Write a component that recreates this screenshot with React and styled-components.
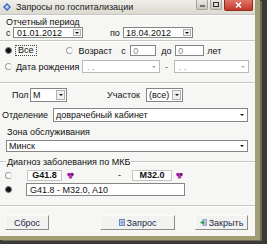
import React from "react";
import styled, { createGlobalStyle } from "styled-components";

const GlobalStyle = createGlobalStyle`
  html, body { margin: 0; padding: 0; background: #3b3a36; }
  body { font-family: "Liberation Sans", Arial, sans-serif; font-size: 9px; color: #111; }
  #root { width: 267px; height: 244px; overflow: hidden; }
`;

const Window = styled.div`
  width: 255px;
  height: 236px;
  background: #f6f6f4;
  border-right: 5px solid #a39d74;
  border-bottom: 4px solid #a39d74;
  box-shadow: 2px 1px 0 #6f6b55;
  display: flex;
  flex-direction: column;
`;

const TitleBar = styled.div`
  height: 14px;
  flex: none;
  display: flex;
  align-items: center;
  padding-left: 3px;
  background: linear-gradient(to bottom, #efeee9, #dcdad0);
`;

const TitleText = styled.span`
  margin-left: 5px;
  font-size: 9px;
  color: #1a1a1a;
  line-height: 14px;
`;

const Controls = styled.div`
  margin-left: auto;
  margin-right: 2px;
  align-self: flex-start;
  display: flex;
  align-items: flex-start;
  gap: 2px;
`;

const CtlButton = styled.div`
  width: ${(p) => p.$w}px;
  height: ${(p) => p.$h}px;
  display: flex;
  align-items: center;
  justify-content: center;
  border-radius: 0 0 2px 2px;
  background: ${(p) =>
    p.$close
      ? "linear-gradient(to bottom, #e0766a, #c3372a)"
      : "linear-gradient(to bottom, #e8e7e2, #c9c7bc)"};
  border: 1px solid ${(p) => (p.$close ? "#8f2a20" : "#a5a397")};
  border-top: none;
`;

const Body = styled.div`
  flex: 1;
  display: flex;
  flex-direction: column;
`;

const Section = styled.div`
  height: ${(p) => p.$h}px;
  flex: none;
  box-sizing: border-box;
  border-top: 1px solid #c6c6c2;
  box-shadow: inset 0 1px 0 #ffffff;
  padding-top: ${(p) => p.$pt || 0}px;
  display: flex;
  flex-direction: column;
`;

const Row = styled.div`
  height: ${(p) => p.$h}px;
  margin-top: ${(p) => p.$mt || 0}px;
  padding-left: ${(p) => p.$pl || 0}px;
  display: flex;
  align-items: center;
  flex: none;
`;

const Label = styled.span`
  margin-left: ${(p) => p.$ml || 0}px;
  width: ${(p) => (p.$w ? `${p.$w}px` : "auto")};
  flex: none;
  white-space: nowrap;
  line-height: 10px;
  color: ${(p) => p.$color || "#111"};
`;

const FocusLabel = styled.span`
  margin-left: ${(p) => p.$ml || 0}px;
  outline: 1px dotted #444;
  padding: 0 2px;
  line-height: 9px;
`;

const Caption = styled.span`
  margin-left: ${(p) => p.$ml || 0}px;
  margin-top: ${(p) => p.$mt || 0}px;
  align-self: flex-start;
  background: #f6f6f4;
  padding: 0 1px;
  line-height: 10px;
  white-space: nowrap;
`;

const Combo = styled.div`
  width: ${(p) => p.$w}px;
  height: ${(p) => p.$h}px;
  margin-left: ${(p) => p.$ml || 0}px;
  flex: none;
  box-sizing: border-box;
  border: 1px solid ${(p) => (p.$disabled ? "#b9b9b6" : "#858585")};
  background: #fff;
  display: flex;
  align-items: stretch;
`;

const ComboValue = styled.span`
  flex: 1;
  padding-left: ${(p) => p.$pl ?? 3}px;
  display: flex;
  align-items: center;
  color: ${(p) => (p.$disabled ? "#8a8a8a" : "#111")};
  font-weight: ${(p) => (p.$bold ? 700 : 400)};
  white-space: nowrap;
  overflow: hidden;
  font-size: ${(p) => p.$fs || 9}px;
`;

const Arrow = styled.span`
  width: ${(p) => p.$w || 8}px;
  flex: none;
  margin: 1px;
  box-sizing: border-box;
  background: ${(p) => (p.$flat ? "#fff" : "#efefed")};
  border: 1px solid ${(p) => (p.$flat ? "#fff" : "#b0b0ac")};
  display: flex;
  align-items: center;
  justify-content: center;
  &::after {
    content: "";
    border-left: 2px solid transparent;
    border-right: 2px solid transparent;
    border-top: 2px solid ${(p) => (p.$disabled ? "#a9a9a9" : "#111")};
  }
`;

const Radio = styled.span`
  width: 5px;
  height: 5px;
  flex: none;
  border-radius: 50%;
  border: 1px solid ${(p) => (p.$checked ? "#777" : "#a0a0a0")};
  border-right-color: ${(p) => (p.$checked ? "#777" : "#e4e4e4")};
  background: ${(p) => (p.$checked ? "#111" : "#fff")};
  margin-left: ${(p) => p.$ml || 0}px;
`;

const CodeBox = styled.div`
  width: ${(p) => p.$w}px;
  height: 11px;
  margin-left: ${(p) => p.$ml || 0}px;
  box-sizing: border-box;
  border: 1px solid #c5c5c2;
  background: #fff;
  display: flex;
  align-items: center;
  justify-content: center;
  font-weight: 700;
  font-size: 9px;
  flex: none;
`;

const Button = styled.div`
  width: ${(p) => p.$w}px;
  height: 15px;
  margin-left: ${(p) => p.$ml || 0}px;
  box-sizing: border-box;
  flex: none;
  border: 1px solid #fbfbfb;
  border-right-color: #8d8d8a;
  border-bottom-color: #8d8d8a;
  background: #f2f2f0;
  display: flex;
  align-items: center;
  justify-content: center;
  gap: 2px;
  color: #1b2a4a;
  font-size: 9px;
`;

const Purple = ({ ml }) => (
  <svg width="7" height="7" viewBox="0 0 7 7" style={{ marginLeft: ml, flex: "none" }}>
    <circle cx="2" cy="2.5" r="1.8" fill="#9b1f9b" />
    <circle cx="5" cy="2.5" r="1.8" fill="#7d1585" />
    <circle cx="3.5" cy="4.8" r="1.9" fill="#b23bb0" />
  </svg>
);

const AppIcon = () => (
  <svg width="8" height="8" viewBox="0 0 8 8">
    <path d="M4 0 L8 4 L4 8 L0 4 Z" fill="#2f5fb3" />
    <path d="M4 1.5 L6.5 4 L4 6.5 L1.5 4 Z" fill="#8fb6ee" />
    <path d="M4 3 L5 4 L4 5 L3 4 Z" fill="#fff" />
  </svg>
);

const QueryIcon = () => (
  <svg width="6" height="7" viewBox="0 0 6 7">
    <rect x="0.5" y="0.5" width="5" height="6" fill="#e9eef8" stroke="#6f86b3" />
    <path d="M1.5 2 H4.5 M1.5 3.5 H4.5 M1.5 5 H4.5" stroke="#3d6bc2" strokeWidth="0.8" />
  </svg>
);

const CloseIcon = () => (
  <svg width="7" height="7" viewBox="0 0 7 7">
    <rect x="3" y="0.5" width="3.5" height="6" fill="#b9c9e3" stroke="#6a7fa6" strokeWidth="0.6" />
    <path d="M0.5 3.5 H3.5" stroke="#2e9a3a" strokeWidth="1.6" />
    <path d="M2.2 1.8 L4 3.5 L2.2 5.2" fill="none" stroke="#2e9a3a" strokeWidth="1.1" />
  </svg>
);

export default function App() {
  return (
    <>
      <GlobalStyle />
      <Window>
        <TitleBar>
          <AppIcon />
          <TitleText>Запросы по госпитализации</TitleText>
          <Controls>
            <CtlButton $w={10} $h={9}>
              <svg width="5" height="5" viewBox="0 0 5 5">
                <path d="M0 4 H5" stroke="#333" strokeWidth="1.2" />
              </svg>
            </CtlButton>
            <CtlButton $w={10} $h={9}>
              <svg width="6" height="5" viewBox="0 0 6 5">
                <rect x="0.5" y="0.5" width="5" height="4" fill="none" stroke="#333" />
              </svg>
            </CtlButton>
            <CtlButton $w={27} $h={10} $close>
              <svg width="7" height="6" viewBox="0 0 7 6">
                <path d="M1 0.5 L6 5.5 M6 0.5 L1 5.5" stroke="#fff" strokeWidth="1.5" />
              </svg>
            </CtlButton>
          </Controls>
        </TitleBar>
        <Body>
          <Section $h={26} $pt={2}>
            <Label $ml={6}>Отчетный период</Label>
            <Row $h={11} $mt={0} $pl={6}>
              <Label $w={7}>с</Label>
              <Combo $w={70} $h={11}>
                <ComboValue $pl={3}>01.01.2012</ComboValue>
                <Arrow $w={8} />
              </Combo>
              <Label $ml={27} $w={13}>по</Label>
              <Combo $w={70} $h={11}>
                <ComboValue $pl={2}>18.04.2012</ComboValue>
                <Arrow $w={8} />
              </Combo>
            </Row>
          </Section>

          <Section $h={42}>
            <Row $h={11} $mt={4} $pl={5}>
              <Radio $checked />
              <FocusLabel $ml={4}>Все</FocusLabel>
              <Radio $ml={30} />
              <Label $ml={6}>Возраст</Label>
              <Label $ml={9} $w={9}>с</Label>
              <Combo $w={26} $h={11}>
                <ComboValue $disabled $pl={2}>0</ComboValue>
              </Combo>
              <Label $ml={5} $w={14}>до</Label>
              <Combo $w={29} $h={11}>
                <ComboValue $disabled $pl={2}>0</ComboValue>
              </Combo>
              <Label $ml={3}>лет</Label>
            </Row>
            <Row $h={13} $mt={4} $pl={5}>
              <Radio />
              <Label $ml={4} $w={66}>Дата рождения</Label>
              <Combo $w={78} $h={13} $disabled>
                <ComboValue $disabled $pl={4}>. .</ComboValue>
                <Arrow $w={8} $flat $disabled />
              </Combo>
              <Label $ml={5} $w={9} $color="#555">-</Label>
              <Combo $w={75} $h={13} $disabled>
                <ComboValue $disabled $pl={4}>. .</ComboValue>
                <Arrow $w={8} $flat $disabled />
              </Combo>
            </Row>
          </Section>

          <Section $h={79}>
            <Row $h={14} $mt={5} $pl={12}>
              <Label $w={18}>Пол</Label>
              <Combo $w={37} $h={14}>
                <ComboValue $pl={2}>М</ComboValue>
                <Arrow $w={9} />
              </Combo>
              <Label $ml={40} $w={39}>Участок</Label>
              <Combo $w={37} $h={14}>
                <ComboValue $pl={2}>(все)</ComboValue>
                <Arrow $w={9} />
              </Combo>
            </Row>
            <Row $h={14} $mt={6} $pl={2}>
              <Label $w={51}>Отделение</Label>
              <Combo $w={195} $h={14}>
                <ComboValue $pl={2}>доврачебный кабинет</ComboValue>
                <Arrow $w={9} $flat />
              </Combo>
            </Row>
            <Row $h={9} $mt={5} $pl={7}>
              <Label>Зона обслуживания</Label>
            </Row>
            <Row $h={12} $mt={4} $pl={6}>
              <Combo $w={242} $h={12}>
                <ComboValue $pl={2}>Минск</ComboValue>
                <Arrow $w={9} $flat />
              </Combo>
            </Row>
          </Section>

          <Section $h={44}>
            <Caption $ml={6} $mt={-5}>Диагноз заболевания по МКБ</Caption>
            <Row $h={12} $mt={2} $pl={5}>
              <Radio />
              <CodeBox $w={35} $ml={15}>G41.8</CodeBox>
              <Purple ml={5} />
              <Label $ml={44} $w={14}>-</Label>
              <CodeBox $w={40}>M32.0</CodeBox>
              <Purple ml={4} />
            </Row>
            <Row $h={13} $mt={2} $pl={5}>
              <Radio $checked />
              <Combo $w={159} $h={13} $ml={14}>
                <ComboValue $pl={3}>G41.8 - M32.0, A10</ComboValue>
              </Combo>
            </Row>
          </Section>

          <Section $h={31}>
            <Row $h={15} $mt={9} $pl={5}>
              <Button $w={44}>Сброс</Button>
              <Button $w={75} $ml={51}>
                <QueryIcon />
                Запрос
              </Button>
              <Button $w={53} $ml={20}>
                <CloseIcon />
                Закрыть
              </Button>
            </Row>
          </Section>
        </Body>
      </Window>
    </>
  );
}
